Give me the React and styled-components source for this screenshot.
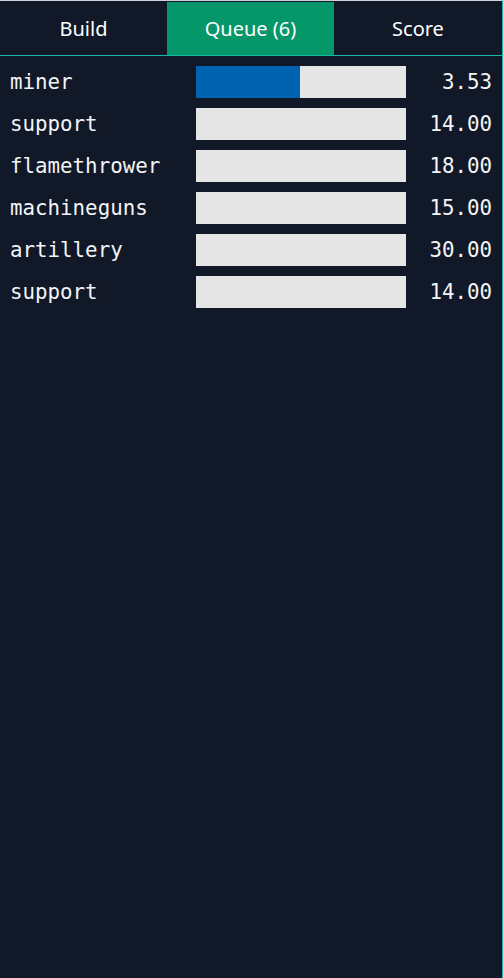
import React from 'react'
import styled, { createGlobalStyle } from 'styled-components'

const GlobalStyle = createGlobalStyle`
  html, body {
    margin: 0;
    padding: 0;
    background: #111827;
  }
  * {
    box-sizing: border-box;
  }
`

const Panel = styled.div`
  width: 503px;
  height: 978px;
  background: #111827;
  border-top: 1px solid #cfd2d6;
  border-right: 1px solid #14b8a6;
  padding-top: 1px;
  color: #f3f4f6;
  display: flex;
  flex-direction: column;
`

const TabBar = styled.div`
  display: grid;
  grid-template-columns: 167px 167px 1fr;
  height: 54px;
  border-bottom: 1px solid #14b8a6;
`

const Tab = styled.div`
  display: flex;
  align-items: center;
  justify-content: center;
  font-family: 'Noto Sans', 'Open Sans', sans-serif;
  font-size: 20px;
  color: #ffffff;
  background: ${props => (props.active ? '#059669' : 'transparent')};
`

const QueueList = styled.div`
  display: flex;
  flex-direction: column;
  gap: 10px;
  padding: 10px 10px 0 10px;
`

const Row = styled.div`
  display: grid;
  grid-template-columns: 186px 210px 1fr;
  align-items: center;
  height: 32px;
  font-family: 'DejaVu Sans Mono', monospace;
  font-size: 20.8px;
  color: #f3f4f6;
`

const Name = styled.span`
  white-space: nowrap;
`

const Track = styled.div`
  height: 32px;
  background: #e5e5e5;
  overflow: hidden;
`

const Fill = styled.div`
  height: 100%;
  background: #0063b2;
`

const Time = styled.span`
  text-align: right;
  padding-right: 0;
`

const queue = [
  { name: 'miner', progress: 0.495, time: '3.53' },
  { name: 'support', progress: 0, time: '14.00' },
  { name: 'flamethrower', progress: 0, time: '18.00' },
  { name: 'machineguns', progress: 0, time: '15.00' },
  { name: 'artillery', progress: 0, time: '30.00' },
  { name: 'support', progress: 0, time: '14.00' },
]

export default function App() {
  return (
    <>
      <GlobalStyle />
      <Panel>
        <TabBar>
          <Tab>Build</Tab>
          <Tab active>Queue (6)</Tab>
          <Tab>Score</Tab>
        </TabBar>
        <QueueList>
          {queue.map((item, i) => (
            <Row key={i}>
              <Name>{item.name}</Name>
              <Track>
                <Fill style={{ width: `${item.progress * 100}%` }} />
              </Track>
              <Time>{item.time}</Time>
            </Row>
          ))}
        </QueueList>
      </Panel>
    </>
  )
}
